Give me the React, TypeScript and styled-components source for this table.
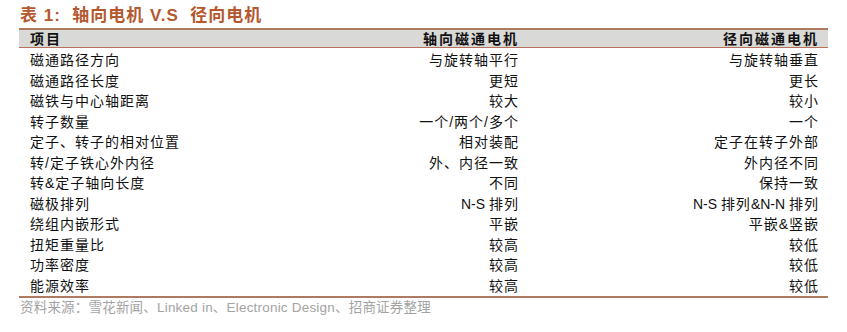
import styled, { createGlobalStyle } from "styled-components";

const GlobalStyle = createGlobalStyle`
  html, body {
    margin: 0;
    padding: 0;
    background: #ffffff;
  }
  body {
    font-family: "Liberation Sans", "Noto Sans CJK SC", sans-serif;
  }
`;

const Page = styled.div`
  width: 847px;
  height: 332px;
  padding: 5px 0 0 19px;
  box-sizing: border-box;
  overflow: hidden;
`;

const Title = styled.div`
  font-size: 17px;
  font-weight: 700;
  color: #b5582e;
  line-height: 22px;
  height: 23px;
  padding-left: 1px;
  letter-spacing: 1px;
  white-space: pre;
`;

const Table = styled.div`
  width: 809px;
  border-top: 2px solid #b07a60;
  border-bottom: 2px solid #b07a60;
`;

const Row = styled.div<{ $header?: boolean }>`
  display: grid;
  grid-template-columns: 1fr 200px 300px;
  padding: 0 10px 0 11px;
  height: ${({ $header }) => ($header ? "17px" : "20.5px")};
  align-items: center;
  background: ${({ $header }) => ($header ? "#d9d9d7" : "transparent")};
  border-bottom: ${({ $header }) => ($header ? "1px solid #b8705a" : "none")};
  margin-bottom: ${({ $header }) => ($header ? "2px" : "0")};
  font-size: 14px;
  font-weight: ${({ $header }) => ($header ? 700 : 400)};
  color: #111111;
  letter-spacing: ${({ $header }) => ($header ? "2px" : "1px")};
  line-height: 1;
`;

const Cell = styled.div<{ $right?: boolean }>`
  text-align: ${({ $right }) => ($right ? "right" : "left")};
  white-space: nowrap;
  margin-right: ${({ $right }) => ($right ? "-1px" : "0")};
`;

const Latin = styled.span`
  letter-spacing: 0;
`;

const Source = styled.div`
  font-size: 13.5px;
  color: #a3a3a3;
  padding: 2px 0 0 1px;
  line-height: 16px;
  letter-spacing: 0.2px;
`;

const rows: [string, React.ReactNode, React.ReactNode][] = [
  ["磁通路径方向", "与旋转轴平行", "与旋转轴垂直"],
  ["磁通路径长度", "更短", "更长"],
  ["磁铁与中心轴距离", "较大", "较小"],
  ["转子数量", "一个/两个/多个", "一个"],
  ["定子、转子的相对位置", "相对装配", "定子在转子外部"],
  ["转/定子铁心外内径", "外、内径一致", "外内径不同"],
  ["转&定子轴向长度", "不同", "保持一致"],
  [
    "磁极排列",
    <><Latin>N-S </Latin>排列</>,
    <><Latin>N-S </Latin>排列<Latin>&amp;N-N </Latin>排列</>,
  ],
  ["绕组内嵌形式", "平嵌", "平嵌&竖嵌"],
  ["扭矩重量比", "较高", "较低"],
  ["功率密度", "较高", "较低"],
  ["能源效率", "较高", "较低"],
];

export default function App() {
  return (
    <>
      <GlobalStyle />
      <Page>
        <Title>{"表 1:  轴向电机 V.S  径向电机"}</Title>
        <Table>
          <Row $header>
            <Cell>项目</Cell>
            <Cell $right>轴向磁通电机</Cell>
            <Cell $right>径向磁通电机</Cell>
          </Row>
          {rows.map(([a, b, c]) => (
            <Row key={a}>
              <Cell>{a}</Cell>
              <Cell $right>{b}</Cell>
              <Cell $right>{c}</Cell>
            </Row>
          ))}
        </Table>
        <Source>资料来源：雪花新闻、Linked in、Electronic Design、招商证券整理</Source>
      </Page>
    </>
  );
}
